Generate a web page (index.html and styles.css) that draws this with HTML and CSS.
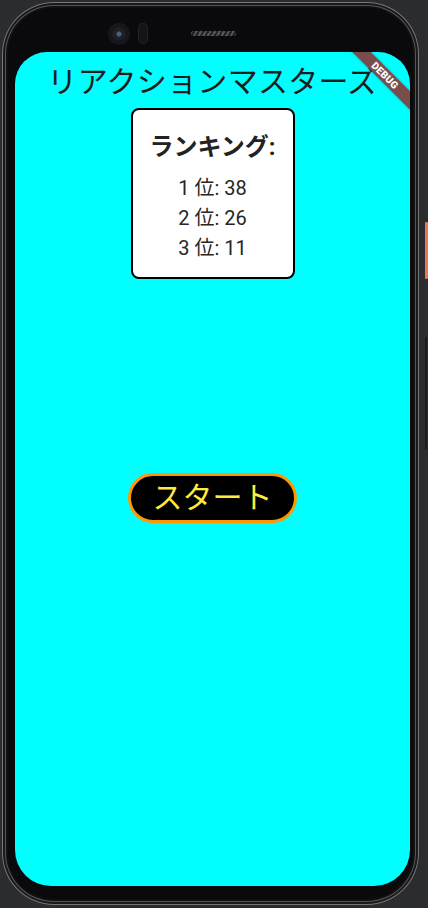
FILE: index.html
```html
<!DOCTYPE html>
<html lang="ja">
<head>
<meta charset="utf-8">
<link rel="stylesheet" href="styles.css">
</head>
<body>
<div class="phone">
  <div class="btn-power"></div>
  <div class="btn-volume"></div>
  <div class="bezel-top">
    <div class="camera"></div>
    <div class="sensor"></div>
    <div class="speaker"></div>
  </div>
  <div class="screen">
    <h1 class="title">リアクションマスターズ</h1>
    <div class="ranking">
      <div class="ranking-head">ランキング:</div>
      <div class="ranking-row">1 位: 38</div>
      <div class="ranking-row">2 位: 26</div>
      <div class="ranking-row">3 位: 11</div>
    </div>
    <button class="start">スタート</button>
    <div class="debug"><span>DEBUG</span></div>
  </div>
</div>
</body>
</html>
```

FILE: styles.css
```css
* { box-sizing: border-box; }
html, body {
  margin: 0;
  padding: 0;
  background: #2b2c2f;
  width: 428px;
  height: 908px;
  overflow: hidden;
  font-family: "Roboto", "Noto Sans CJK JP", sans-serif;
}
.phone {
  position: relative;
  margin: 2px 0 0 2px;
  width: 417px;
  height: 903px;
  border-radius: 52px;
  background: #0a090c;
  box-shadow: inset 0 0 0 1px #777, inset 0 0 0 3px #1a1a1c, inset 0 0 0 4px #555, inset 0 0 0 6px #111;
  padding: 50px 0 0 13px;
}
.btn-power {
  position: absolute;
  left: 423px;
  top: 220px;
  width: 3px;
  height: 57px;
  background: #e07858;
  border-radius: 1px;
}
.btn-volume {
  position: absolute;
  left: 423px;
  top: 335px;
  width: 2px;
  height: 112px;
  background: #1c1c1e;
}
.bezel-top {
  position: absolute;
  left: 0;
  top: 0;
  width: 100%;
  height: 50px;
}
.camera {
  position: absolute;
  left: 106px;
  top: 21px;
  width: 22px;
  height: 22px;
  border-radius: 50%;
  background: radial-gradient(circle at 50% 50%, #4a6080 0 2px, #1e2026 3px 6px, #16171b 7px);
}
.sensor {
  position: absolute;
  left: 136px;
  top: 21px;
  width: 10px;
  height: 21px;
  border-radius: 5px;
  background: #141418;
  box-shadow: inset 0 0 0 1px #222;
}
.speaker {
  position: absolute;
  left: 189px;
  top: 29px;
  width: 45px;
  height: 5px;
  border-radius: 3px;
  background: repeating-linear-gradient(120deg, #555 0 2px, #222 2px 4px);
}
.screen {
  position: relative;
  width: 395px;
  height: 834px;
  background: #00ffff;
  border-radius: 32px 32px 36px 36px;
  overflow: hidden;
  display: flex;
  flex-direction: column;
  align-items: center;
}
.title {
  margin: 10px 0 0;
  font-size: 30px;
  font-weight: 400;
  line-height: 40px;
  color: #1c1c1c;
  letter-spacing: 0.3px;
}
.ranking {
  margin-top: 6px;
  width: 164px;
  height: 171px;
  background: #fff;
  border: 2px solid #000;
  border-radius: 8px;
  display: flex;
  flex-direction: column;
  align-items: center;
  padding-top: 21px;
  color: #222;
}
.ranking-head {
  font-size: 24px;
  font-weight: 700;
  line-height: 32px;
  margin-bottom: 10px;
}
.ranking-row {
  font-size: 20px;
  line-height: 30px;
  font-weight: 400;
  color: #262626;
}
.start {
  margin-top: 194px;
  width: 169px;
  height: 50px;
  border: 3px solid #ff9800;
  border-radius: 25px;
  background: #000;
  color: #ffeb3b;
  font-family: "Roboto", "Noto Sans CJK JP", sans-serif;
  font-size: 30px;
  line-height: 40px;
  padding: 0;
}
.debug {
  position: absolute;
  right: -35px;
  top: 17px;
  width: 120px;
  height: 13px;
  background: #7a4d4d;
  transform: rotate(45deg);
  display: flex;
  align-items: center;
  justify-content: center;
  box-shadow: 0 0 3px rgba(0,0,0,0.25);
}
.debug span {
  color: #fff;
  font-size: 10px;
  font-weight: 900;
  line-height: 13px;
  letter-spacing: 0.2px;
}
```
